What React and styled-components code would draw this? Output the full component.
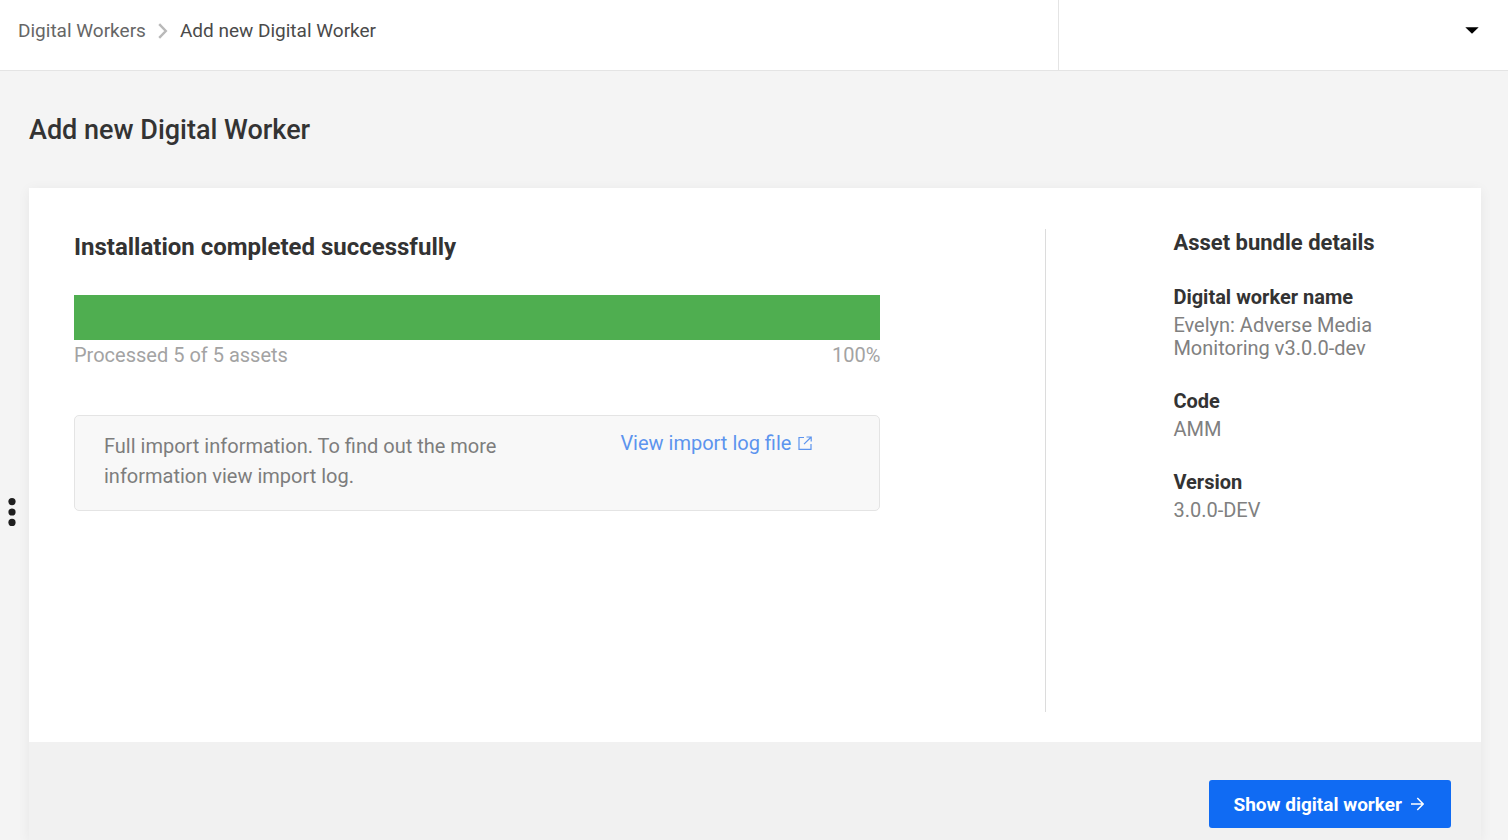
import React from 'react'
import { styled, createGlobalStyle } from 'styled-components'

const details = [
  { label: 'Digital worker name', value: 'Evelyn: Adverse Media Monitoring v3.0.0-dev' },
  { label: 'Code', value: 'AMM' },
  { label: 'Version', value: '3.0.0-DEV' },
]

const App = () => {
  const processed = 5
  const total = 5
  const percent = Math.round((processed / total) * 100)

  return (
    <Page>
      <GlobalStyle />
      <Header>
        <Breadcrumbs aria-label="Breadcrumb">
          <a href="#workers">Digital Workers</a>
          <svg width="10" height="16" viewBox="0 0 10 16" fill="none" stroke="#b9b9b9" strokeWidth="2.4">
            <path d="M1.2 1.2L7.8 8L1.2 14.8" />
          </svg>
          <span>Add new Digital Worker</span>
        </Breadcrumbs>
        <UserMenu>
          <IconButton type="button" aria-label="Account menu">
            <svg width="14" height="7" viewBox="0 0 14 7">
              <path d="M0.3 0.3H13.7L7 6.8Z" fill="#000" />
            </svg>
          </IconButton>
        </UserMenu>
      </Header>

      <Content>
        <Rail>
          <IconButton type="button" aria-label="Open menu">
            <svg width="8" height="28" viewBox="0 0 8 28" fill="#1f1f1f">
              <circle cx="4" cy="3.6" r="3.6" />
              <circle cx="4" cy="14" r="3.6" />
              <circle cx="4" cy="24.4" r="3.6" />
            </svg>
          </IconButton>
        </Rail>
        <Main>
          <PageTitle>Add new Digital Worker</PageTitle>
          <Card>
            <CardBody>
              <Installation>
                <h2 id="install-title">Installation completed successfully</h2>
                <ProgressTrack
                  role="progressbar"
                  aria-labelledby="install-title"
                  aria-valuenow={percent}
                  aria-valuemin={0}
                  aria-valuemax={100}
                >
                  <ProgressBar style={{ width: `${percent}%` }} />
                </ProgressTrack>
                <ProgressInfo>
                  <span>Processed {processed} of {total} assets</span>
                  <span>{percent}%</span>
                </ProgressInfo>
                <ImportBox>
                  <p>Full import information. To find out the more information view import log.</p>
                  <LogLink href="#log">
                    View import log file
                    <svg width="14" height="14" viewBox="0 0 14 14" fill="none" stroke="currentColor" strokeWidth="1.2">
                      <path d="M6 1.5H1V13.4H13V8" />
                      <path d="M8.5 1H13.2V5.5M13.2 1L6 8.2" />
                    </svg>
                  </LogLink>
                </ImportBox>
              </Installation>
              <Details>
                <h3>Asset bundle details</h3>
                <dl>
                  {details.map((item) => (
                    <DetailItem key={item.label}>
                      <dt>{item.label}</dt>
                      <dd>{item.value}</dd>
                    </DetailItem>
                  ))}
                </dl>
              </Details>
            </CardBody>
            <CardFooter>
              <PrimaryButton type="button">
                Show digital worker
                <svg width="13" height="14" viewBox="0 0 13 14" fill="none" stroke="currentColor" strokeWidth="1.5">
                  <path d="M0 7H12M6.3 1L12.2 7L6.3 13" />
                </svg>
              </PrimaryButton>
            </CardFooter>
          </Card>
        </Main>
      </Content>
    </Page>
  )
}

export default App


const GlobalStyle = createGlobalStyle`
  *{
    box-sizing: border-box;
  }
  body{
    margin: 0;
    background-color: #f4f4f4;
    color: #333;
    font-family: Roboto, "Liberation Sans", sans-serif;
    font-size: 20px;
    line-height: 24px;
  }
  h1,h2,h3,p,dl,dd{
    margin: 0;
  }
  button{
    font-family: inherit;
    cursor: pointer;
  }
  svg{
    display: block;
    flex-shrink: 0;
  }
`

const Page = styled.div`
  min-height: 100vh;
  display: flex;
  flex-direction: column;
`

const Header = styled.header`
  display: flex;
  height: 71px;
  background-color: #fff;
  border-bottom: 1px solid #e4e4e4;
`

const Breadcrumbs = styled.nav`
  flex: 1;
  display: flex;
  align-items: center;
  gap: 12px;
  padding: 0 18px 9px;
  color: #4a4a4a;
  font-size: 19px;
  a{
    color: #666;
    text-decoration: none;
  }
`

const UserMenu = styled.div`
  width: 450px;
  display: flex;
  align-items: center;
  justify-content: flex-end;
  padding: 0 29px 9px;
  border-left: 1px solid #e4e4e4;
`

const IconButton = styled.button`
  padding: 0;
  border: 0;
  background: none;
`

const Content = styled.div`
  flex: 1;
  display: flex;
`

const Rail = styled.aside`
  width: 29px;
  padding: 427px 8px 0;
`

const Main = styled.main`
  flex: 1;
  display: flex;
  flex-direction: column;
  padding-right: 27px;
`

const PageTitle = styled.h1`
  padding: 43px 0 42px;
  font-size: 27px;
  font-weight: 500;
  line-height: 32px;
`

const Card = styled.section`
  flex: 1;
  display: flex;
  flex-direction: column;
  box-shadow: 0 2px 12px rgba(0, 0, 0, 0.06);
`

const CardBody = styled.div`
  flex: 1;
  display: grid;
  grid-template-columns: 7fr 3fr;
  padding: 41px 0 30px;
  background-color: #fff;
`

const Installation = styled.div`
  padding: 2px 165px 0 45px;
  h2{
    margin-bottom: 32px;
    font-size: 24px;
    font-weight: 700;
    line-height: 32px;
  }
`

const ProgressTrack = styled.div`
  height: 45px;
  background-color: #e4e4e4;
`

const ProgressBar = styled.div`
  height: 100%;
  background-color: #4fae50;
`

const ProgressInfo = styled.div`
  display: flex;
  justify-content: space-between;
  padding-top: 3px;
  color: #a3a3a3;
`

const ImportBox = styled.div`
  display: flex;
  justify-content: space-between;
  align-items: flex-start;
  margin-top: 48px;
  padding: 15px 67px 19px 29px;
  background-color: #f8f8f8;
  border: 1px solid #e4e4e4;
  border-radius: 5px;
  p{
    width: 400px;
    color: #7d7d7d;
    line-height: 30px;
  }
`

const LogLink = styled.a`
  display: flex;
  align-items: center;
  gap: 7px;
  color: #5c94ee;
  text-decoration: none;
  &:hover{
    text-decoration: underline;
  }
`

const Details = styled.aside`
  padding: 0 60px 0 127px;
  border-left: 1px solid #dcdcdc;
  h3{
    margin-bottom: 28px;
    font-size: 22px;
    font-weight: 700;
    line-height: 28px;
  }
`

const DetailItem = styled.div`
  margin-bottom: 29px;
  dt{
    margin-bottom: 5px;
    font-weight: 700;
  }
  dd{
    color: #808080;
    line-height: 23px;
  }
`

const CardFooter = styled.footer`
  display: flex;
  justify-content: flex-end;
  padding: 38px 30px 12px;
  background-color: #f1f1f1;
`

const PrimaryButton = styled.button`
  display: flex;
  align-items: center;
  gap: 9px;
  height: 48px;
  padding: 0 27px 0 24px;
  border: 0;
  border-radius: 3px;
  background-color: #106bf3;
  color: #fff;
  font-size: 19px;
  font-weight: 700;
`
